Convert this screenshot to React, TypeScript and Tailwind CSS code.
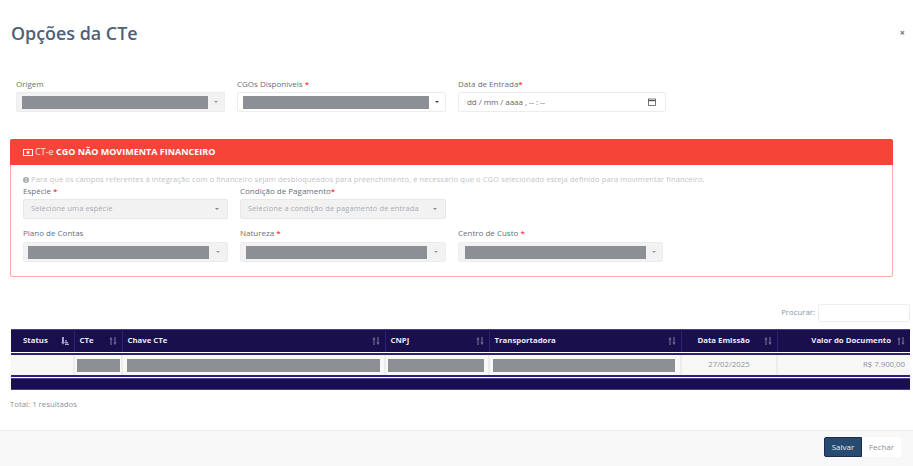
const Caret = ({ c = "border-t-[#555]" }: { c?: string }) => (
  <span className={`w-0 h-0 border-x-[2.5px] border-x-transparent border-t-[2.5px] ${c}`} />
);

function Label({ text, req, tight }: { text: string; req?: boolean; tight?: boolean }) {
  return (
    <div className="h-[11px] leading-[11px] text-[8px] text-[#66707c] whitespace-nowrap">
      {text}
      {req && <span className="text-[#f00]">{tight ? "*" : " *"}</span>}
    </div>
  );
}

function MaskSelect({ disabled, dark, inset, width }: { disabled?: boolean; dark?: boolean; inset: string; width: string }) {
  return (
    <div
      className={`h-[20px] flex items-center rounded-[2px] border border-[#ececec] ${inset} ${
        disabled ? "bg-[#f2f2f2]" : "bg-white"
      }`}
    >
      <div className={`h-[13px] bg-[#8c8f96] shrink-0 ${width}`} />
      <div className="flex-1 flex justify-center">
        <Caret c={dark ? "border-t-[#444]" : "border-t-[#999]"} />
      </div>
    </div>
  );
}

function TextSelect({ text }: { text: string }) {
  return (
    <div className="h-[20px] flex items-center justify-between rounded-[2px] border border-[#e8e8e8] bg-[#f2f2f2] pl-[7px] pr-[8px]">
      <span className="text-[7.5px] tracking-[0.12px] text-[#a9adb2] whitespace-nowrap">{text}</span>
      <Caret c="border-t-[#888]" />
    </div>
  );
}

function SortIcon() {
  return (
    <svg width="8" height="8" viewBox="0 0 8 8" className="shrink-0 text-[#6f6c8c]" fill="currentColor">
      <path d="M2 0 L3.6 2.4 H2.6 V8 H1.4 V2.4 H0.4 Z" />
      <path d="M6 8 L7.6 5.6 H6.6 V0 H5.4 V5.6 H4.4 Z" />
    </svg>
  );
}

function StatusIcon() {
  return (
    <svg width="8" height="8" viewBox="0 0 8 8" className="shrink-0 text-[#a5a3bf]" fill="currentColor">
      <path d="M1 0 H3 V5 H4 L2 7.5 L0 5 H1 Z" />
      <path d="M4 5 H7 V6.2 H4 Z M4 6.8 H8 V8 H4 Z M4 3.2 H6 V4.4 H4 Z" />
    </svg>
  );
}

function Th({ text, pad, right, icon }: { text: string; pad: string; right?: boolean; icon?: boolean }) {
  return (
    <th className="p-0 border-r border-[#2c2178] last:border-r-0 font-bold">
      <div className={`h-[22px] flex items-center pr-[5px] ${pad} ${right ? "justify-end gap-[6px]" : "justify-between"}`}>
        <span className="text-[7.8px] text-[#e9e8f2] whitespace-nowrap">{text}</span>
        {icon ? <StatusIcon /> : <SortIcon />}
      </div>
    </th>
  );
}

function Td({ children, right, center }: { children?: React.ReactNode; right?: boolean; center?: boolean }) {
  return (
    <td
      className={`p-0 h-[20px] border-r-2 border-[#ececec] last:border-r-0 bg-[#f8f8f8] text-[7.8px] text-[#8d9196] ${
        right ? "text-right pr-[5px]" : center ? "text-center" : ""
      }`}
    >
      {children}
    </td>
  );
}

const Mask = ({ inset }: { inset: string }) => <div className={`h-[13px] mt-[1px] bg-[#8c8f96] ${inset}`} />;

const Cols = () => (
  <colgroup>
    <col className="w-[63px]" />
    <col className="w-[48px]" />
    <col className="w-[263px]" />
    <col className="w-[104px]" />
    <col className="w-[192px]" />
    <col className="w-[96px]" />
    <col className="w-[133px]" />
  </colgroup>
);

export default function App() {
  return (
    <div
      className="w-[913px] h-[466px] bg-white flex flex-col overflow-hidden"
      style={{ fontFamily: '"Open Sans", sans-serif' }}
    >
      {/* Title */}
      <div className="h-[78px] pl-[11px] pr-[8px] pt-[21px] flex items-start justify-between shrink-0">
        <h1 className="text-[17.9px] leading-[24px] font-semibold text-[#506078]">Opções da CTe</h1>
        <span className="text-[9px] leading-[9px] mt-[7px] font-bold text-[#5a6a80]">×</span>
      </div>

      {/* Top fields */}
      <div className="grid grid-cols-[209px_209px_208px] gap-x-[12px] pl-[16px] shrink-0">
        <div>
          <div className="h-[14px]">
            <Label text="Origem" />
          </div>
          <MaskSelect disabled inset="pl-[5px]" width="w-[186px]" />
        </div>
        <div>
          <div className="h-[14px]">
            <Label text="CGOs Disponíveis" req />
          </div>
          <MaskSelect dark inset="pl-[5px]" width="w-[186px]" />
        </div>
        <div>
          <div className="h-[14px]">
            <Label text="Data de Entrada" req tight />
          </div>
          <div className="h-[20px] flex items-center justify-between rounded-[2px] border border-[#ececec] pl-[8px] pr-[9px]">
            <span className="text-[8px] tracking-[-0.05px] text-[#666]">dd / mm / aaaa , -- : --</span>
            <svg width="8" height="8" viewBox="0 0 8 8" fill="none" stroke="#555" strokeWidth="0.8">
              <rect x="0.5" y="1" width="7" height="6.5" />
              <path d="M0.5 2.6 H7.5" strokeWidth="1.2" />
            </svg>
          </div>
        </div>
      </div>

      {/* Alert panel */}
      <div className="ml-[10px] mr-[20px] mt-[27px] h-[138px] rounded-[2px] border border-[#ffaaa4] shrink-0">
        <div className="h-[26px] -mx-px -mt-px bg-[#f64438] rounded-t-[2px] flex items-center pl-[13px] text-[9px] text-white whitespace-nowrap">
          <svg width="10" height="7" viewBox="0 0 10 7" className="mr-[2px]" fill="none" stroke="#fff">
            <rect x="0.5" y="0.5" width="9" height="6" strokeWidth="1" />
            <circle cx="5" cy="3.5" r="1.4" fill="#fff" stroke="none" />
          </svg>
          <span className="text-[#ffe0dd]">CT-e&nbsp;</span>
          <span className="font-bold">CGO NÃO MOVIMENTA FINANCEIRO</span>
        </div>
        <div className="pl-[12px] pr-[228px]">
          <div className="mt-[9px] h-[11px] flex items-center text-[7.5px] leading-[11px] tracking-[0.12px] text-[#c2c4c8] whitespace-nowrap">
            <svg width="6" height="6" viewBox="0 0 6 6" className="mr-[2px] shrink-0">
              <circle cx="3" cy="3" r="3" fill="#a8abb0" />
              <rect x="2.6" y="2.5" width="0.9" height="2.4" fill="#fff" />
              <rect x="2.6" y="1.1" width="0.9" height="0.9" fill="#fff" />
            </svg>
            Para que os campos referentes à integração com o financeiro sejam desbloqueados para preenchimento, é necessário que o CGO selecionado esteja definido para movimentar financeiro.
          </div>
          <div className="grid grid-cols-[205px_206px_205px] gap-x-[12px]">
            <div>
              <div className="h-[14px]">
                <Label text="Espécie" req />
              </div>
              <TextSelect text="Selecione uma espécie" />
            </div>
            <div>
              <div className="h-[14px]">
                <Label text="Condição de Pagamento" req tight />
              </div>
              <TextSelect text="Selecione a condição de pagamento de entrada" />
            </div>
            <div />
            <div className="mt-[8px]">
              <div className="h-[15px]">
                <Label text="Plano de Contas" />
              </div>
              <MaskSelect disabled inset="pl-[4px]" width="w-[181px]" />
            </div>
            <div className="mt-[8px]">
              <div className="h-[15px]">
                <Label text="Natureza" req />
              </div>
              <MaskSelect disabled inset="pl-[5px]" width="w-[181px]" />
            </div>
            <div className="mt-[8px]">
              <div className="h-[15px]">
                <Label text="Centro de Custo" req />
              </div>
              <MaskSelect disabled inset="pl-[6px]" width="w-[181px]" />
            </div>
          </div>
        </div>
      </div>

      {/* Search */}
      <div className="mt-[27px] h-[18px] pr-[3px] flex items-center justify-end gap-[3px] shrink-0">
        <span className="text-[7.8px] text-[#8a95a3]">Procurar:</span>
        <div className="w-[92px] h-[18px] rounded-[2px] border border-[#eeeeee] bg-white" />
      </div>

      {/* Table */}
      <div className="mt-[7px] ml-[11px] w-[899px] shrink-0">
        <table className="w-[899px] table-fixed border-collapse">
          <Cols />
          <thead>
            <tr className="bg-[#1a0f4d] border-t border-[#4a3f8a]">
              <Th text="Status" pad="pl-[12px]" icon />
              <Th text="CTe" pad="pl-[5px]" />
              <Th text="Chave CTe" pad="pl-[5px]" />
              <Th text="CNPJ" pad="pl-[5px]" />
              <Th text="Transportadora" pad="pl-[5px]" />
              <Th text="Data Emissão" pad="pl-[16px]" />
              <Th text="Valor do Documento" pad="pl-[5px]" right />
            </tr>
          </thead>
        </table>
        <div className="h-[1px] bg-white" />
        <div className="h-[2px] bg-[#2c2178]" />
        <table className="w-[899px] table-fixed border-collapse">
          <Cols />
          <tbody>
            <tr>
              <Td />
              <Td>
                <Mask inset="ml-[2px] mr-[1px]" />
              </Td>
              <Td>
                <Mask inset="ml-[4px] mr-[4px]" />
              </Td>
              <Td>
                <Mask inset="ml-[2px] mr-[4px]" />
              </Td>
              <Td>
                <Mask inset="ml-[3px] mr-[5px]" />
              </Td>
              <Td center>27/02/2025</Td>
              <Td right>R$ 7.900,00</Td>
            </tr>
          </tbody>
        </table>
        <div className="h-[2px] bg-[#2c2178]" />
        <div className="h-[1px] bg-white" />
        <div className="h-[12px] bg-[#1a0f4d] border-y border-[#4a3f8a]" />
      </div>

      <div className="mt-[9px] pl-[10px] text-[7.8px] leading-[11px] text-[#8a939c] shrink-0">
        Total: 1 resultados
      </div>

      {/* Footer */}
      <div className="mt-auto h-[36px] bg-[#f8f8f8] border-t border-[#ececec] flex items-start justify-end pt-[6px] pr-[12px] shrink-0">
        <div className="w-[38px] h-[20px] flex items-center justify-center bg-[#264a70] border border-[#1c2a55] rounded-l-[2px] text-[8px] text-[#e8edf3]">
          Salvar
        </div>
        <div className="w-[39px] h-[20px] flex items-center justify-center bg-white rounded-r-[2px] text-[8px] text-[#8a8f96]">
          Fechar
        </div>
      </div>
    </div>
  );
}
